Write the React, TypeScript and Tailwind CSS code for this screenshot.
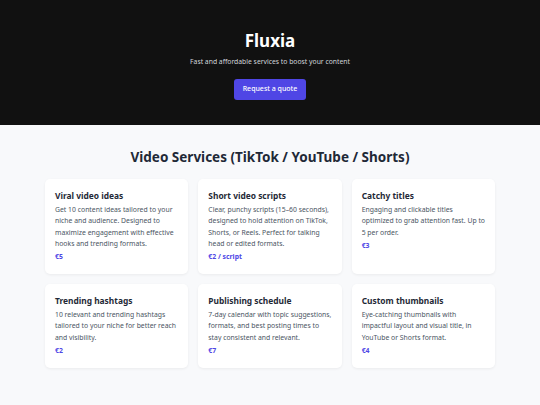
import React from "react";

type Service = { title: string; body: React.ReactNode; price: string };

const services: Service[] = [
  {
    title: "Viral video ideas",
    body: "Get 10 content ideas tailored to your niche and audience. Designed to maximize engagement with effective hooks and trending formats.",
    price: "€5",
  },
  {
    title: "Short video scripts",
    body: "Clear, punchy scripts (15–60 seconds), designed to hold attention on TikTok, Shorts, or Reels. Perfect for talking head or edited formats.",
    price: "€2 / script",
  },
  {
    title: "Catchy titles",
    body: (
      <>
        Engaging and clickable titles
        <br />
        optimized to grab attention fast. Up to 5 per order.
      </>
    ),
    price: "€3",
  },
  {
    title: "Trending hashtags",
    body: "10 relevant and trending hashtags tailored to your niche for better reach and visibility.",
    price: "€2",
  },
  {
    title: "Publishing schedule",
    body: "7-day calendar with topic suggestions, formats, and best posting times to stay consistent and relevant.",
    price: "€7",
  },
  {
    title: "Custom thumbnails",
    body: "Eye-catching thumbnails with impactful layout and visual title, in YouTube or Shorts format.",
    price: "€4",
  },
];

export default function App() {
  return (
    <div className="min-h-[405px] bg-[#f8f9fb] font-['Noto_Sans',sans-serif]">
      {/* Hero */}
      <header className="flex h-[125px] flex-col items-center bg-[#111111] pt-[30px] text-center">
        <h1 className="text-[17px] font-bold leading-[22px] text-white">Fluxia</h1>
        <p className="mt-[5px] text-[6.8px] leading-[10px] text-[#d1d5db]">
          Fast and affordable services to boost your content
        </p>
        <button className="mt-[12px] h-[21px] w-[72px] rounded-[3px] bg-[#4f46e5] text-[7px] font-medium text-white">
          Request a quote
        </button>
      </header>

      {/* Services */}
      <section className="px-[45px] pt-[22px] pb-[30px]">
        <h2 className="text-center text-[13.5px] font-bold leading-[20px] text-[#1f2937]">
          Video Services (TikTok / YouTube / Shorts)
        </h2>
        <div className="mt-[12px] grid grid-cols-3 gap-[10px]">
          {services.map((s) => (
            <div
              key={s.title}
              className="rounded-[5px] bg-white pl-[10px] pr-[8px] pt-[10px] pb-[12px] shadow-[0_1px_3px_rgba(0,0,0,0.06)]"
            >
              <h3 className="text-[8.4px] font-bold leading-[14px] text-[#1f2937]">{s.title}</h3>
              <p className="mt-[1px] text-[6.85px] leading-[11.3px] text-[#4b5563]">{s.body}</p>
              <p className="mt-[2px] text-[6.85px] font-bold leading-[11px] text-[#4f46e5]">{s.price}</p>
            </div>
          ))}
        </div>
      </section>
    </div>
  );
}
